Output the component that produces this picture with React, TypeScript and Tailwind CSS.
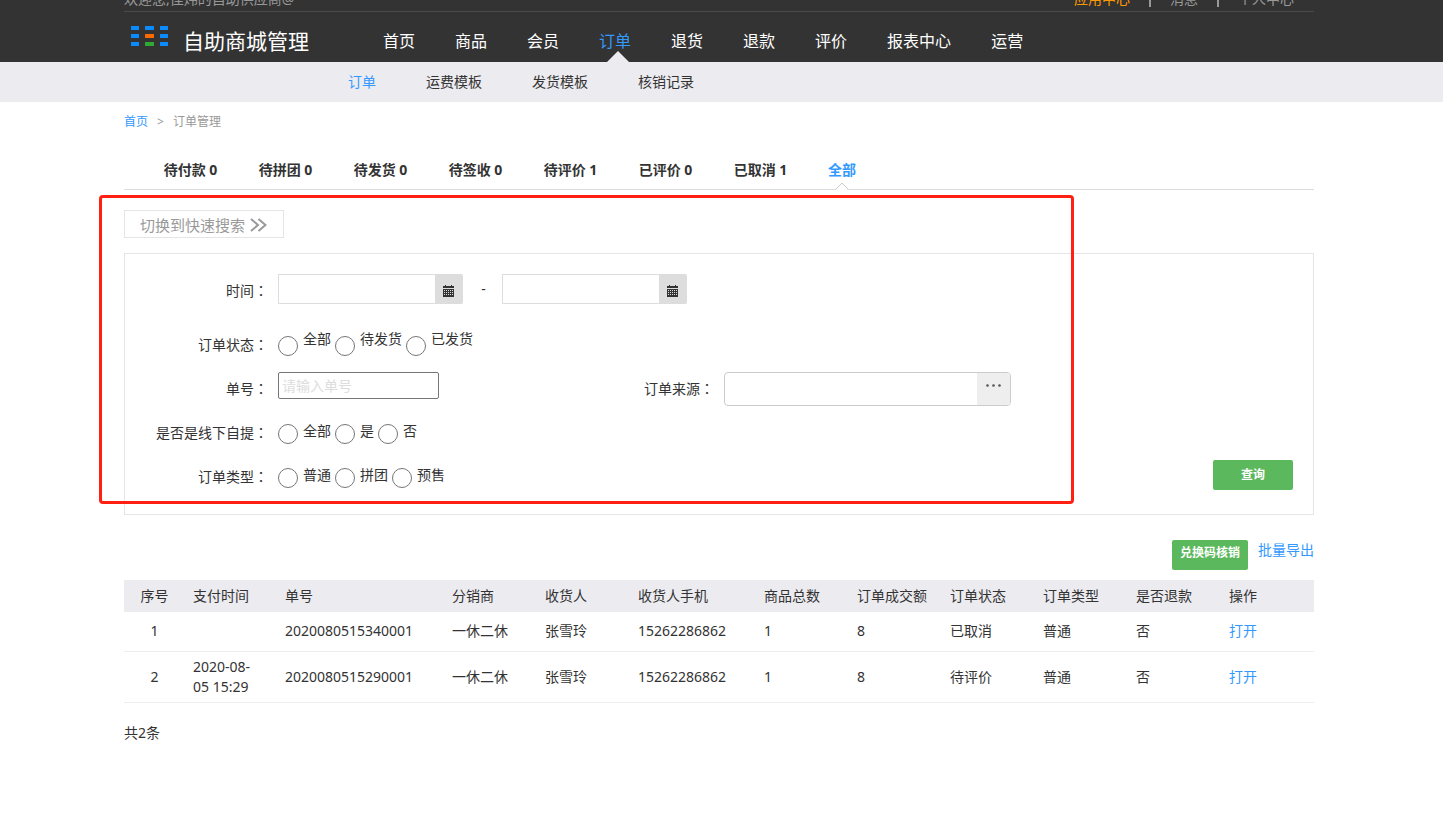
import { useState } from "react";

const topLinks = ["应用中心", "消息", "个人中心"];

const mainNav = ["首页", "商品", "会员", "订单", "退货", "退款", "评价", "报表中心", "运营"];

const subNav = ["订单", "运费模板", "发货模板", "核销记录"];

const tabs = [
  "待付款 0",
  "待拼团 0",
  "待发货 0",
  "待签收 0",
  "待评价 1",
  "已评价 0",
  "已取消 1",
  "全部",
];

const columns = [
  { title: "序号", width: "w-[61px]", cell: "px-2 text-center" },
  { title: "支付时间", width: "w-[92px]", cell: "pl-2 pr-5" },
  { title: "单号", width: "w-[167px]", cell: "px-2" },
  { title: "分销商", width: "w-[93px]", cell: "px-2" },
  { title: "收货人", width: "w-[93px]", cell: "px-2" },
  { title: "收货人手机", width: "w-[126px]", cell: "px-2" },
  { title: "商品总数", width: "w-[93px]", cell: "px-2" },
  { title: "订单成交额", width: "w-[93px]", cell: "px-2" },
  { title: "订单状态", width: "w-[93px]", cell: "px-2" },
  { title: "订单类型", width: "w-[93px]", cell: "px-2" },
  { title: "是否退款", width: "w-[93px]", cell: "px-2" },
  { title: "操作", width: "", cell: "px-2" },
];

const orders = [
  ["1", "", "2020080515340001", "一休二休", "张雪玲", "15262286862", "1", "8", "已取消", "普通", "否"],
  ["2", "2020-08-05 15:29", "2020080515290001", "一休二休", "张雪玲", "15262286862", "1", "8", "待评价", "普通", "否"],
];

const container = "mx-auto w-full max-w-[1190px]";
const labelClass = "w-[143px] shrink-0 text-right leading-[42px]";

function Logo() {
  return (
    <svg width="38" height="20" viewBox="0 0 38 20" aria-hidden="true">
      {[0, 8, 16].map((y) => (
        <g key={y} fill="#0a8cff">
          <rect x="0" y={y} width="8" height="4" rx="0.5" />
          <rect
            x="14"
            y={y}
            width="9"
            height="4"
            rx="0.5"
            fill={y === 8 ? "#ff6a00" : y === 16 ? "#2fa836" : "#0a8cff"}
          />
          <rect x="29" y={y} width="8" height="4" rx="0.5" />
        </g>
      ))}
    </svg>
  );
}

function CalendarIcon() {
  return (
    <svg width="12" height="12" viewBox="0 0 12 12" aria-hidden="true">
      <path d="M2 0h1v1h5V0h1v1h2v2H0V1h2z" fill="#333" />
      <path d="M0 4h11v8H0z" fill="#333" />
      {[5, 7, 9].map((y) => (
        <path key={y} d={`M1 ${y + 0.5}h9`} stroke="#ddd" strokeDasharray="1 1" />
      ))}
    </svg>
  );
}

// fullwidth colon, centred in its box
function Colon() {
  return <span className="font-['Noto_Sans_CJK_TC',sans-serif]">：</span>;
}

function DateField({ label }: { label: string }) {
  return (
    <div className="flex h-[30px] w-[185px]">
      <input
        type="text"
        aria-label={label}
        className="min-w-0 flex-1 border border-r-0 border-[#ddd] px-2 outline-none"
      />
      <button
        type="button"
        aria-label={label}
        className="flex w-7 items-center justify-center rounded-r-xs bg-[#ddd] pt-1"
      >
        <CalendarIcon />
      </button>
    </div>
  );
}

type RadioRowProps = {
  label: string;
  name: string;
  options: string[];
  raised?: boolean;
};

function RadioRow({ label, name, options, raised }: RadioRowProps) {
  return (
    <div role="radiogroup" aria-label={label} className="flex h-11 gap-2.5">
      <span className={labelClass}>
        {label}
        <Colon />
      </span>
      <div className="flex items-start gap-1">
        {options.map((option) => (
          <label key={option} className="flex items-start gap-[5px]">
            <input
              type="radio"
              name={name}
              className="mt-[13px] h-5 w-5 appearance-none rounded-full border border-[#767676] bg-white checked:border-[6px] checked:border-[#3399ff]"
            />
            <span className={raised ? "mt-1.5" : "mt-2.5"}>{option}</span>
          </label>
        ))}
      </div>
    </div>
  );
}

function Header() {
  return (
    <header>
      <div className="bg-[#333] pr-[5px]">
        <div className={container}>
          <div className="-mt-3.5 flex h-[26px] items-center justify-between border-b border-[#4a4a4a] text-[#999]">
            <span>欢迎您,佳炜的自助供应商@</span>
            <ul className="flex pr-5">
              {topLinks.map((item, i) => (
                <li key={item} className="flex items-center">
                  {i > 0 && <span className="mx-[19px] h-4 w-0.5 bg-[#999]" />}
                  <a href="#" className={i === 0 ? "text-[#ff9900]" : ""}>
                    {item}
                  </a>
                </li>
              ))}
            </ul>
          </div>

          <div className="flex h-[50px]">
            <a href="#" className="flex w-[239px] shrink-0 pl-[7px] text-white">
              <span className="pt-3.5">
                <Logo />
              </span>
              <span className="pt-2 pl-3.5 text-[21px] leading-[42px]">自助商城管理</span>
            </a>
            <nav className="flex text-base">
              {mainNav.map((item) => (
                <a
                  key={item}
                  href="#"
                  className={`relative px-5 pt-2 leading-[42px] ${item === "订单" ? "text-[#3399ff]" : "text-white"}`}
                >
                  {item}
                  {item === "订单" && (
                    <svg width="22" height="11" viewBox="0 0 22 11" className="absolute bottom-0 left-7" aria-hidden="true">
                      <path d="M11 0l11 11H0z" fill="#ecebf0" />
                    </svg>
                  )}
                </a>
              ))}
            </nav>
          </div>
        </div>
      </div>

      <div className="bg-[#ecebf0] pr-[5px]">
        <nav className={`${container} flex h-10 items-center gap-[50px] pl-56`}>
          {subNav.map((item, i) => (
            <a key={item} href="#" className={i === 0 ? "text-[#3399ff]" : ""}>
              {item}
            </a>
          ))}
        </nav>
      </div>
    </header>
  );
}

function SearchPanel() {
  return (
    <form className="border border-[#e5e5e5] pt-[15px] pr-5 pb-[15px]" onSubmit={(e) => e.preventDefault()}>
      <div className="mb-2.5 flex h-11 gap-2.5">
        <span className={labelClass}>
          时间
          <Colon />
        </span>
        <div className="flex items-start pt-[5px]">
          <DateField label="开始时间" />
          <span className="w-[39px] pl-0.5 text-center leading-[30px]">-</span>
          <DateField label="结束时间" />
        </div>
      </div>

      <RadioRow label="订单状态" name="status" options={["全部", "待发货", "已发货"]} raised />

      <div className="flex h-11">
        <div className="flex w-[446px] gap-2.5">
          <label htmlFor="orderNo" className={labelClass}>
            单号
            <Colon />
          </label>
          <input
            id="orderNo"
            type="text"
            placeholder="请输入单号"
            className="mt-[5px] h-[27px] w-[161px] rounded-xs border border-[#767676] px-[3px] outline-none placeholder:text-[#ddd]"
          />
        </div>
        <div className="flex gap-2.5">
          <label htmlFor="source" className={labelClass}>
            订单来源
            <Colon />
          </label>
          <div className="mt-[5px] flex h-[34px] w-[287px] overflow-hidden rounded-sm border border-[#ccc]">
            <input id="source" type="text" className="min-w-0 flex-1 px-3 outline-none" />
            <button type="button" aria-label="选择订单来源" className="flex w-[33px] justify-center bg-[#eee] pt-[11px]">
              <svg width="15" height="3" viewBox="0 0 15 3" fill="#555" aria-hidden="true">
                <circle cx="1.5" cy="1.5" r="1.3" />
                <circle cx="7.5" cy="1.5" r="1.3" />
                <circle cx="13.5" cy="1.5" r="1.3" />
              </svg>
            </button>
          </div>
        </div>
      </div>

      <RadioRow label="是否是线下自提" name="pickup" options={["全部", "是", "否"]} />

      <div className="flex items-start justify-between">
        <RadioRow label="订单类型" name="type" options={["普通", "拼团", "预售"]} />
        <button
          type="submit"
          className="mt-[5px] h-[30px] w-20 rounded-xs bg-[#5cb85c] text-xs font-bold text-white"
        >
          查询
        </button>
      </div>
    </form>
  );
}

function OrderTable() {
  return (
    <table className="w-full table-fixed text-left">
      <thead>
        <tr className="h-8 bg-[#ecebf0]">
          {columns.map((col) => (
            <th key={col.title} className={`px-2 font-normal ${col.width} ${col.title === "序号" ? "text-center" : ""}`}>
              {col.title}
            </th>
          ))}
        </tr>
      </thead>
      <tbody>
        {orders.map((row) => (
          <tr key={row[0]} className="h-[39px] border-b border-[#eee]">
            {row.map((cell, i) => (
              <td key={columns[i].title} className={`py-[5px] ${columns[i].cell}`}>
                {cell}
              </td>
            ))}
            <td className="px-2 py-[5px]">
              <a href="#" className="text-[#3399ff]">
                打开
              </a>
            </td>
          </tr>
        ))}
      </tbody>
    </table>
  );
}

export default function App() {
  const [active, setActive] = useState("全部");

  return (
    <div className="bg-white font-['Noto_Sans','Noto_Sans_CJK_SC',sans-serif] text-sm leading-5 text-[#333]">
      <Header />

      <main className="pr-[5px]">
        <div className={container}>
          <div className="flex h-10 items-center gap-[9px] text-xs text-[#999]">
            <a href="#" className="text-[#3399ff]">
              首页
            </a>
            <span>&gt;</span>
            <span>订单管理</span>
          </div>

          <div className="mt-2 flex h-10 border-b border-[#ddd] pl-[19px]" role="tablist">
            {tabs.map((tab) => (
              <button
                key={tab}
                type="button"
                role="tab"
                aria-selected={active === tab}
                onClick={() => setActive(tab)}
                className={`relative min-w-[95px] px-5 font-bold last:min-w-0 ${active === tab ? "text-[#3399ff]" : ""}`}
              >
                {tab}
                {active === tab && (
                  <svg
                    width="14"
                    height="8"
                    viewBox="0 0 14 8"
                    className="absolute -bottom-px left-1/2 -translate-x-1/2"
                    aria-hidden="true"
                  >
                    <path d="M0.5 7.5L7 1l6.500 6.500" fill="#fff" stroke="#ccc" />
                    <path d="M2 7.5h10" stroke="#fff" />
                  </svg>
                )}
              </button>
            ))}
          </div>

          <section className="relative pt-5">
            <button
              type="button"
              className="mb-[15px] flex h-7 w-40 items-center gap-[5px] border border-[#e5e5e5] pt-0.5 pl-[15px] text-[15px] text-[#999]"
            >
              切换到快速搜索
              <svg width="17" height="14" viewBox="0 0 17 14" fill="none" stroke="#999" strokeWidth="2" aria-hidden="true">
                <path d="M1 1l7 6-7 6M8.500 1l7 6-7 6" />
              </svg>
            </button>

            <SearchPanel />

            <div className="pointer-events-none absolute top-[5px] right-60 bottom-[11px] -left-[25px] rounded-sm border-3 border-[#ff2012]" />
          </section>

          <div className="mt-[25px] mb-2.5 flex items-start justify-end gap-2.5">
            <button type="button" className="h-[30px] rounded-xs bg-[#5cb85c] px-2 pb-1 text-xs font-bold text-white">
              兑换码核销
            </button>
            <a href="#" className="text-[#3399ff]">
              批量导出
            </a>
          </div>

          <OrderTable />

          <p className="mt-5">共2条</p>
        </div>
      </main>
    </div>
  );
}
